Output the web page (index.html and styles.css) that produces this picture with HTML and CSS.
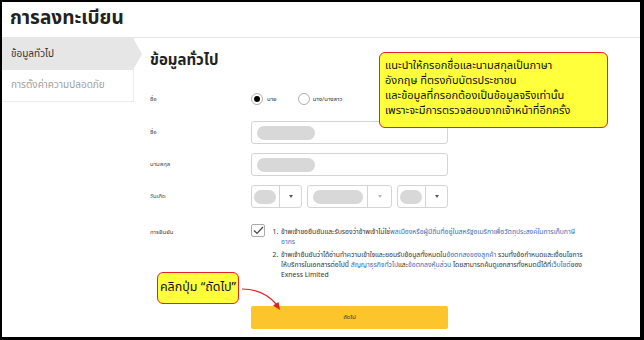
FILE: index.html
```html
<!DOCTYPE html>
<html lang="th">
<head>
    <meta charset="UTF-8">
    <meta name="viewport" content="width=device-width, initial-scale=1.0">
    <title>การลงทะเบียน</title>
    <link rel="stylesheet" href="styles.css">
</head>
<body>
    <div class="frame">
        <div class="header">
            <h1>การลงทะเบียน</h1>
        </div>
        <div class="layout">
            <div class="sidebar">
                <div class="side-item active">ข้อมูลทั่วไป</div>
                <div class="side-item">การตั้งค่าความปลอดภัย</div>
            </div>
            <div class="main">
                <h2>ข้อมูลทั่วไป</h2>
                <div class="row row-radio">
                    <div class="label">ชื่อ</div>
                    <div class="field radios">
                        <span class="radio checked"></span><span class="radio-text">นาย</span>
                        <span class="radio"></span><span class="radio-text">นาง/นางสาว</span>
                    </div>
                </div>
                <div class="row row-input">
                    <div class="label">ชื่อ</div>
                    <div class="field"><div class="input"><span class="blur-pill"></span></div></div>
                </div>
                <div class="row row-input">
                    <div class="label">นามสกุล</div>
                    <div class="field"><div class="input"><span class="blur-pill"></span></div></div>
                </div>
                <div class="row row-input">
                    <div class="label">วันเกิด</div>
                    <div class="field dates">
                        <div class="select sel-day"><span class="sel-val"><span class="blur-pill"></span></span><span class="sel-arrow"></span></div>
                        <div class="select sel-month"><span class="sel-val"><span class="blur-pill"></span></span><span class="sel-arrow light"></span></div>
                        <div class="select sel-year"><span class="sel-val"><span class="blur-pill"></span></span><span class="sel-arrow"></span></div>
                    </div>
                </div>
                <div class="row row-confirm">
                    <div class="label">การยืนยัน</div>
                    <div class="field confirm">
                        <span class="checkbox">
                            <svg width="11" height="9" viewBox="0 0 11 9"><path d="M1 4.5 L4 7.5 L10 1" fill="none" stroke="#444" stroke-width="1.2"/></svg>
                        </span>
                        <ol class="terms">
                            <li>ข้าพเจ้าขอยืนยันและรับรองว่าข้าพเจ้าไม่ใช่<a href="#">พลเมืองหรือผู้มีถิ่นที่อยู่ในสหรัฐอเมริกาเพื่อวัตถุประสงค์ในการเก็บภาษี<br>อากร</a></li>
                            <li>ข้าพเจ้ายืนยันว่าได้อ่านทำความเข้าใจและยอมรับข้อมูลทั้งหมดใน<a href="#">ข้อตกลงของลูกค้า</a> รวมทั้งข้อกำหนดและเงื่อนไขการ<br>ให้บริการในเอกสารต่อไปนี้ <a href="#">สัญญาธุรกิจทั่วไป</a>และ<a href="#">ข้อตกลงหุ้นส่วน</a> โดยสามารถค้นดูเอกสารทั้งหมดนี้ได้ที่<a href="#">เว็บไซต์</a>ของ<br>Exness Limited</li>
                        </ol>
                    </div>
                </div>
                <div class="row row-button">
                    <div class="label"></div>
                    <div class="field"><button type="button" class="btn-next">ถัดไป</button></div>
                </div>
            </div>
        </div>

        <div class="note note-top">
            แนะนำให้กรอกชื่อและนามสกุลเป็นภาษา<br>
            อังกฤษ ที่ตรงกับบัตรประชาชน<br>
            และข้อมูลที่กรอกต้องเป็นข้อมูลจริงเท่านั้น<br>
            เพราะจะมีการตรวจสอบจากเจ้าหน้าที่อีกครั้ง
        </div>
        <div class="note note-click">คลิกปุ่ม “ถัดไป”</div>
        <svg class="note-arrow" width="46" height="30" viewBox="0 0 46 30">
            <path d="M2 4 Q24 4 37 20" fill="none" stroke="#e02020" stroke-width="1.2"/>
            <path d="M40 25 L33 20.5 L38.5 17 Z" fill="#e02020"/>
        </svg>
    </div>
</body>
</html>
```

FILE: styles.css
```css
body {
    margin: 0;
    font-family: 'Noto Sans Thai', 'Noto Sans', 'DejaVu Sans', sans-serif;
    background-color: #000;
}

.frame {
    position: relative;
    width: 644px;
    height: 340px;
    box-sizing: border-box;
    border-style: solid;
    border-color: #000;
    border-width: 2px 4px 3px 2px;
    background-color: #fff;
    overflow: hidden;
}

.header {
    height: 35px;
    border-bottom: 1px solid #e6e6e6;
}

h1 {
    margin: 0;
    padding-left: 8px;
    font-size: 19px;
    line-height: 34px;
    font-weight: bold;
    color: #222;
}

.layout {
    display: flex;
}

.sidebar {
    width: 131px;
    flex-shrink: 0;
    align-self: flex-start;
    border-right: 1px solid #ececec;
    border-bottom: 1px solid #ececec;
}

.side-item {
    position: relative;
    height: 31px;
    padding-left: 9px;
    font-size: 10px;
    line-height: 30px;
    color: #a0a0a0;
}

.side-item.active {
    height: 32px;
    line-height: 33px;
    background-color: #e6e6e6;
    color: #333;
}

.side-item.active::after {
    content: '';
    position: absolute;
    top: 0;
    right: -9px;
    border-top: 16px solid transparent;
    border-bottom: 16px solid transparent;
    border-left: 9px solid #e6e6e6;
}

.main {
    flex: 1;
    padding: 12px 0 0 16px;
}

h2 {
    margin: 0 0 19px 0;
    font-size: 15px;
    line-height: 22px;
    font-weight: bold;
    color: #222;
}

.row {
    display: flex;
    align-items: center;
}

.label {
    width: 101px;
    flex-shrink: 0;
    font-size: 6px;
    color: #444;
}

.field {
    width: 197px;
}

.row-radio {
    height: 16px;
    margin-bottom: 14px;
}

.radios {
    display: flex;
    align-items: center;
}

.radio {
    width: 12px;
    height: 12px;
    border: 1px solid #b0b0b0;
    border-radius: 50%;
    display: flex;
    align-items: center;
    justify-content: center;
    box-sizing: border-box;
}

.radio.checked::after {
    content: '';
    width: 6px;
    height: 6px;
    border-radius: 50%;
    background-color: #000;
}

.radio-text {
    font-size: 6px;
    color: #333;
    margin: 0 21px 0 4px;
}

.radio-text:last-child {
    margin-left: 3px;
}

.row-input {
    height: 23px;
    margin-bottom: 9px;
}

.input {
    height: 23px;
    box-sizing: border-box;
    border: 1px solid #d4d4d4;
    border-radius: 3px;
    display: flex;
    align-items: center;
    padding-left: 5px;
}

.blur-pill {
    display: block;
    width: 58px;
    height: 14px;
    border-radius: 7px;
    background-color: #d8d8d8;
}

.dates {
    display: flex;
    gap: 5px;
}

.select {
    height: 23px;
    box-sizing: border-box;
    border: 1px solid #d4d4d4;
    border-radius: 3px;
    display: flex;
}

.sel-val {
    display: flex;
    align-items: center;
    padding-left: 2px;
    border-right: 1px solid #d4d4d4;
}

.sel-day { width: 51px; }
.sel-day .sel-val { width: 25px; }
.sel-day .blur-pill { width: 22px; }

.sel-month { width: 85px; }
.sel-month .sel-val { width: 60px; padding-left: 5px; box-sizing: border-box; }
.sel-month .blur-pill { width: 50px; }

.sel-year { width: 51px; }
.sel-year .sel-val { width: 25px; }
.sel-year .blur-pill { width: 22px; }

.sel-arrow {
    flex: 1;
    display: flex;
    align-items: center;
    justify-content: center;
}

.sel-arrow::after {
    content: '';
    border-left: 2.5px solid transparent;
    border-right: 2.5px solid transparent;
    border-top: 3px solid #555;
}

.sel-arrow.light::after {
    border-top-color: #bbb;
}

.row-confirm {
    align-items: flex-start;
    margin-top: 16px;
}

.row-confirm .label {
    margin-top: 4px;
}

.confirm {
    display: flex;
    width: auto;
}

.checkbox {
    width: 14px;
    height: 13px;
    flex-shrink: 0;
    box-sizing: border-box;
    border: 1px solid #aaa;
    border-radius: 2px;
    display: flex;
    align-items: center;
    justify-content: center;
}

.terms {
    margin: 0;
    padding-left: 15px;
    font-size: 6.8px;
    line-height: 10px;
    color: #333;
    white-space: nowrap;
}

.terms li {
    padding-left: 1px;
    margin-top: 3px;
}

.terms li + li {
    margin-top: 3px;
}

.terms a {
    color: #3a6db5;
    text-decoration: none;
}

.row-button {
    margin-top: 22px;
}

.btn-next {
    width: 197px;
    height: 23px;
    border: none;
    border-radius: 2px;
    background-color: #fdc52c;
    font-family: inherit;
    font-size: 6px;
    color: #333;
}

.note {
    position: absolute;
    background-color: #ffff3c;
    border: 1.5px solid #e8202a;
    border-radius: 6px;
    color: #111;
    box-sizing: border-box;
}

.note-top {
    left: 377px;
    top: 50px;
    width: 229px;
    height: 76px;
    padding: 5px 0 0 5px;
    font-size: 11px;
    line-height: 15px;
}

.note-click {
    left: 155px;
    top: 270px;
    width: 82px;
    height: 32px;
    font-size: 12.5px;
    line-height: 29px;
    text-align: center;
}

.note-arrow {
    position: absolute;
    left: 238px;
    top: 283px;
}
```
